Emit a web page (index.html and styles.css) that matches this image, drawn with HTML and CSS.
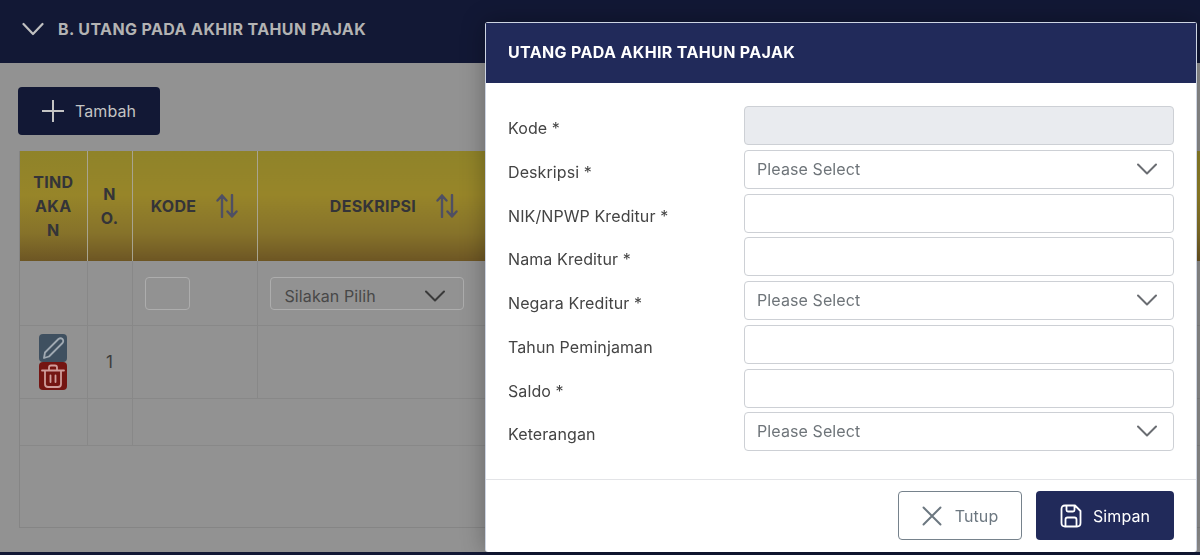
FILE: index.html
```html
<!DOCTYPE html>
<html lang="en">

<head>
    <meta charset="UTF-8">
    <title>Utang Pada Akhir Tahun Pajak</title>
    <link rel="stylesheet" href="styles.css">
</head>

<body>
    <section class="section">
        <div class="section-header">
            <svg class="section-chevron" width="22" height="14" viewBox="0 0 22 14"><path d="M1.5 2 L11 12 L20.5 2" /></svg>
            <span>B. UTANG PADA AKHIR TAHUN PAJAK</span>
        </div>
        <div class="section-body">
            <button class="add-button">
                <svg width="22" height="22" viewBox="0 0 22 22"><path d="M11 0.5 V21.5 M0.5 11 H21.5" /></svg>
                Tambah
            </button>
            <div class="table-wrap">
                <table class="data-table">
                    <colgroup>
                        <col class="col-action">
                        <col class="col-no">
                        <col class="col-code">
                        <col class="col-desc">
                        <col>
                    </colgroup>
                    <thead>
                        <tr>
                            <th class="narrow">TINDAKAN</th>
                            <th class="narrow">NO.</th>
                            <th>
                                <div class="sort-head">KODE
                                    <svg class="sort-icon" width="22" height="24" viewBox="0 0 22 24"><path d="M6 23 V1.5 M1.5 6.5 L6 1.5 L10.5 6.5 M16 1 V22.5 M11.5 17.5 L16 22.5 L20.5 17.5" /></svg>
                                </div>
                            </th>
                            <th>
                                <div class="sort-head">DESKRIPSI
                                    <svg class="sort-icon" width="22" height="24" viewBox="0 0 22 24"><path d="M6 23 V1.5 M1.5 6.5 L6 1.5 L10.5 6.5 M16 1 V22.5 M11.5 17.5 L16 22.5 L20.5 17.5" /></svg>
                                </div>
                            </th>
                            <th></th>
                        </tr>
                    </thead>
                    <tbody>
                        <tr class="filter-row">
                            <td></td>
                            <td></td>
                            <td><div class="filter-input"></div></td>
                            <td>
                                <div class="filter-select">
                                    <span>Silakan Pilih</span>
                                    <svg width="20" height="12" viewBox="0 0 20 12"><path d="M1 1.5 L10 10.5 L19 1.5" /></svg>
                                </div>
                            </td>
                            <td></td>
                        </tr>
                        <tr class="data-row">
                            <td>
                                <div class="row-actions">
                                    <span class="icon-button edit">
                                        <svg width="24" height="24" viewBox="0 0 24 24"><path d="M3 22 L4 16.5 L17.5 3 Q19.5 1.5 21.5 3 Q23 5 21.5 7 L8 20.5 Z" /></svg>
                                    </span>
                                    <span class="icon-button delete">
                                        <svg width="24" height="24" viewBox="0 0 24 24"><path d="M1 6.5 H23 M8 6 V3.5 Q8 1.5 10 1.5 H14 Q16 1.5 16 3.5 V6 M4 7 V20 Q4 23 7 23 H17 Q20 23 20 20 V7 M9.5 11.5 V18 M14.5 11.5 V18" /></svg>
                                    </span>
                                </div>
                            </td>
                            <td class="cell-center">1</td>
                            <td></td>
                            <td></td>
                            <td></td>
                        </tr>
                        <tr class="footer-row">
                            <td></td>
                            <td></td>
                            <td colspan="3"></td>
                        </tr>
                    </tbody>
                </table>
            </div>
        </div>
    </section>
    <div class="next-section"></div>

    <div class="modal">
        <div class="modal-header">UTANG PADA AKHIR TAHUN PAJAK</div>
        <div class="modal-body">
            <div class="form-row">
                <label>Kode *</label>
                <input class="field" type="text" disabled>
            </div>
            <div class="form-row">
                <label>Deskripsi *</label>
                <div class="field select-field">
                    <span>Please Select</span>
                    <svg width="20" height="12" viewBox="0 0 20 12"><path d="M1 1.5 L10 10.5 L19 1.5" /></svg>
                </div>
            </div>
            <div class="form-row">
                <label>NIK/NPWP Kreditur *</label>
                <input class="field" type="text">
            </div>
            <div class="form-row">
                <label>Nama Kreditur *</label>
                <input class="field" type="text">
            </div>
            <div class="form-row">
                <label>Negara Kreditur *</label>
                <div class="field select-field">
                    <span>Please Select</span>
                    <svg width="20" height="12" viewBox="0 0 20 12"><path d="M1 1.5 L10 10.5 L19 1.5" /></svg>
                </div>
            </div>
            <div class="form-row">
                <label>Tahun Peminjaman</label>
                <input class="field" type="text">
            </div>
            <div class="form-row">
                <label>Saldo *</label>
                <input class="field" type="text">
            </div>
            <div class="form-row">
                <label>Keterangan</label>
                <div class="field select-field">
                    <span>Please Select</span>
                    <svg width="20" height="12" viewBox="0 0 20 12"><path d="M1 1.5 L10 10.5 L19 1.5" /></svg>
                </div>
            </div>
        </div>
        <div class="modal-footer">
            <button class="btn btn-close">
                <svg width="20" height="20" viewBox="0 0 20 20"><path d="M1.5 1.5 L18.5 18.5 M18.5 1.5 L1.5 18.5" /></svg>
                Tutup
            </button>
            <button class="btn btn-save">
                <svg width="22" height="24" viewBox="0 0 22 24"><path d="M5 1.5 H15 L20.5 7 V19 Q20.5 22.5 17 22.5 H5 Q1.5 22.5 1.5 19 V5 Q1.5 1.5 5 1.5 Z M6.5 2 V6 Q6.5 7.5 8 7.5 H13 Q14.5 7.5 14.5 6 V2 M5.5 22 V15.5 Q5.5 13.5 7.5 13.5 H14.5 Q16.5 13.5 16.5 15.5 V22" /></svg>
                Simpan
            </button>
        </div>
    </div>
</body>

</html>
```

FILE: styles.css
```css
* {
    box-sizing: border-box;
}

html,
body {
    height: 100%;
}

body {
    margin: 0;
    overflow: hidden;
    background-color: #929292;
    font-family: Inter, 'Liberation Sans', sans-serif;
    font-size: 16px;
    letter-spacing: 0.1px;
    color: #3d3d3d;
}

svg {
    flex: none;
    fill: none;
    stroke-width: 2;
    stroke-linecap: round;
    stroke-linejoin: round;
}

.section-header {
    height: 63px;
    padding: 0 22px 5px;
    display: flex;
    align-items: center;
    gap: 14px;
    background-color: #121835;
    color: #b3b3b3;
    font-weight: 700;
    letter-spacing: 0.38px;
}

.section-chevron {
    stroke: #c0c0c0;
    stroke-width: 2.2;
}

.section-body {
    height: 489px;
    padding: 24px 0 0 18px;
}

.add-button {
    height: 48px;
    width: 142px;
    padding: 0 0 0 24px;
    display: flex;
    align-items: center;
    gap: 11px;
    border: none;
    border-radius: 4px;
    background-color: #121835;
    color: #c4c4c4;
    font-family: inherit;
    font-size: 16px;
    letter-spacing: inherit;
}

.add-button svg {
    stroke: #c4c4c4;
}

.table-wrap {
    height: 377px;
    margin: 16px 0 0 1px;
    border-left: 1px solid #858585;
    border-bottom: 1px solid #858585;
}

.data-table {
    width: 100%;
    table-layout: fixed;
    border-collapse: collapse;
}

.col-action {
    width: 67px;
}

.col-no {
    width: 45px;
}

.col-code {
    width: 125px;
}

.col-desc {
    width: 274px;
}

.data-table th {
    height: 110px;
    padding: 0 12px;
    background: linear-gradient(#8f8329, #978529 40%, #86722a 75%, #6d5624);
    border-right: 1px solid #a8a48f;
    color: #343438;
    font-weight: 700;
    line-height: 24px;
    letter-spacing: 0.3px;
    text-align: center;
}

.data-table th.narrow {
    word-break: break-all;
}

.sort-head {
    display: flex;
    align-items: center;
    justify-content: center;
    gap: 20px;
}

.sort-icon {
    stroke: #4f4f63;
    stroke-width: 2.4;
}

.data-table td {
    padding: 0 12px;
    border-right: 1px solid #888;
    border-bottom: 1px solid #888;
}

.filter-row td {
    height: 64px;
    padding-top: 1px;
}

.data-row td {
    height: 73px;
}

.footer-row td {
    height: 47px;
}

.data-table th:last-child,
.data-table td:last-child {
    border-right: none;
}

.cell-center {
    text-align: center;
    font-size: 17px;
}

.filter-input {
    width: 45px;
    height: 33px;
    border: 1px solid #adadad;
    border-radius: 4px;
}

.filter-select {
    width: 194px;
    height: 33px;
    padding: 5px 18px 0 14px;
    display: flex;
    align-items: center;
    justify-content: space-between;
    border: 1px solid #adadad;
    border-radius: 4px;
    color: #484848;
}

.filter-select svg {
    stroke: #3a3a3a;
}

.row-actions {
    width: 28px;
    margin-left: 7px;
    display: flex;
    flex-direction: column;
}

.icon-button {
    width: 28px;
    height: 28px;
    display: flex;
    align-items: center;
    justify-content: center;
    border-radius: 4px;
}

.icon-button svg {
    stroke-width: 1.8;
}

.icon-button.edit {
    background-color: #3f5060;
    stroke: #a0a9b2;
}

.icon-button.delete {
    background-color: #741512;
    stroke: #cf9c9a;
}

.next-section {
    height: 3px;
    background-color: #121835;
}

.modal {
    position: fixed;
    top: 22px;
    left: 485px;
    width: 712px;
    height: 530px;
    display: flex;
    flex-direction: column;
    background-color: #fff;
    border: 1px solid #cdd4e2;
    border-bottom: none;
    border-radius: 3px;
    box-shadow: 0 0 24px rgba(0, 0, 0, 0.3);
}

.modal-header {
    height: 60px;
    flex: none;
    padding: 0 22px 2px;
    display: flex;
    align-items: center;
    background-color: #212a5a;
    color: #fff;
    font-weight: 700;
    letter-spacing: 0.36px;
}

.modal-body {
    flex: 1;
    padding: 23px 22px 0;
    display: flex;
    flex-direction: column;
    gap: 4.75px;
}

.form-row {
    display: flex;
    align-items: center;
}

.form-row label {
    width: 236px;
    flex: none;
    padding-top: 5px;
    color: #444;
}

.field {
    width: 430px;
    height: 39px;
    padding: 0 12px;
    border: 1px solid #cdd0d5;
    border-radius: 4px;
    background-color: #fff;
    font-family: inherit;
    font-size: 16px;
}

.field:disabled {
    background-color: #e9ebef;
}

.select-field {
    display: flex;
    align-items: center;
    justify-content: space-between;
    padding-right: 16px;
    padding-bottom: 1px;
    color: #6e7479;
}

.select-field svg {
    stroke: #6a6d72;
}

.modal-footer {
    height: 73px;
    flex: none;
    padding: 11px 22px 0 0;
    display: flex;
    justify-content: flex-end;
    gap: 14px;
    border-top: 1px solid #e3e4e7;
}

.btn {
    height: 49px;
    padding-bottom: 1px;
    display: flex;
    align-items: center;
    justify-content: center;
    border-radius: 4px;
    font-family: inherit;
    font-size: 16px;
    letter-spacing: inherit;
}

.btn-close {
    width: 124px;
    gap: 13px;
    border: 1px solid #76828c;
    background-color: #fff;
    color: #6c7780;
}

.btn-close svg {
    stroke: #6c7780;
}

.btn-save {
    width: 138px;
    gap: 11px;
    border: none;
    background-color: #212a5a;
    color: #fff;
}

.btn-save svg {
    stroke: #fff;
    stroke-width: 1.8;
}
```
